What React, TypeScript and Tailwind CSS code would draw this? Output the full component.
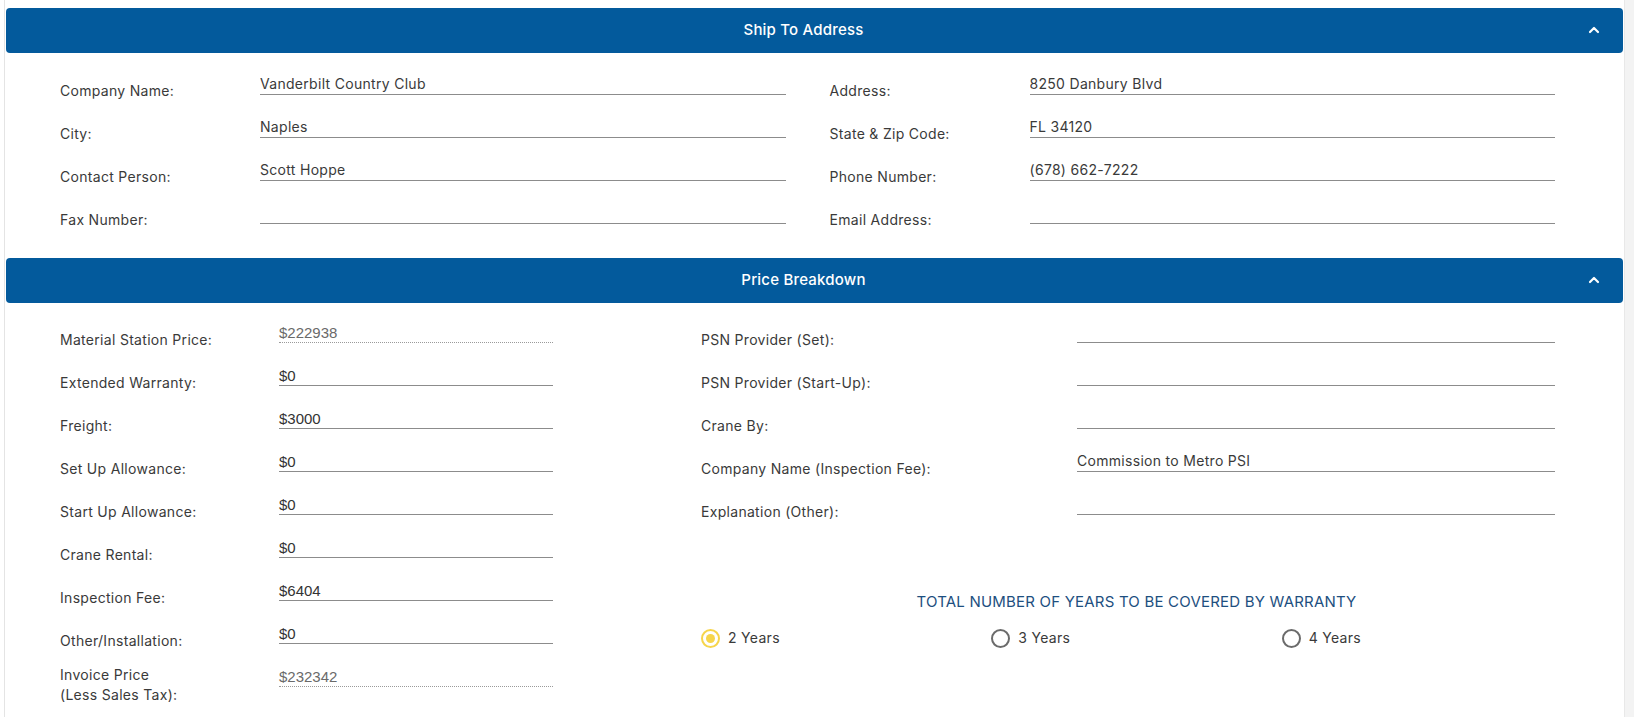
import React from "react";

const shipLeft = [
  { label: "Company Name:", value: "Vanderbilt Country Club" },
  { label: "City:", value: "Naples" },
  { label: "Contact Person:", value: "Scott Hoppe" },
  { label: "Fax Number:", value: "" },
];

const shipRight = [
  { label: "Address:", value: "8250 Danbury Blvd" },
  { label: "State & Zip Code:", value: "FL 34120" },
  { label: "Phone Number:", value: "(678) 662-7222" },
  { label: "Email Address:", value: "" },
];

const prices = [
  { label: "Material Station Price:", value: "$222938", readOnly: true },
  { label: "Extended Warranty:", value: "$0" },
  { label: "Freight:", value: "$3000" },
  { label: "Set Up Allowance:", value: "$0" },
  { label: "Start Up Allowance:", value: "$0" },
  { label: "Crane Rental:", value: "$0" },
  { label: "Inspection Fee:", value: "$6404" },
  { label: "Other/Installation:", value: "$0" },
];

const providers = [
  { label: "PSN Provider (Set):", value: "" },
  { label: "PSN Provider (Start-Up):", value: "" },
  { label: "Crane By:", value: "" },
  { label: "Company Name (Inspection Fee):", value: "Commission to Metro PSI" },
  { label: "Explanation (Other):", value: "" },
];

const SectionHeader = ({ title }: { title: string }) => (
  <div className="mx-[1px] flex h-[45px] items-center rounded-[4px] bg-[#035a9c] pl-[13px] pr-[23px] text-white">
    <div className="flex-1 text-center text-[15px] font-medium tracking-[0.2px]">{title}</div>
    <svg width="12" height="8" viewBox="0 0 12 8" className="mb-[2px]">
      <polyline points="2,6 6,2 10,6" fill="none" stroke="white" strokeWidth="2.2" strokeLinecap="round" strokeLinejoin="round" />
    </svg>
  </div>
);

const ShipRow = ({ label, value }: { label: string; value: string }) => (
  <div className="grid h-[43px] grid-cols-[200px_1fr] items-start">
    <div className="mt-[28px] leading-[20px] text-[14px] tracking-[0.3px] text-[#3a3a3a]">{label}</div>
    <div className="mt-[20px] h-[22px] truncate border-b border-[#8c8c8c] pt-[1px] leading-[20px] text-[14px] tracking-[0.3px] text-[#3a3a3a]">
      {value}
    </div>
  </div>
);

const Radio = ({ label, checked }: { label: string; checked?: boolean }) => (
  <div className="flex items-center gap-[8px]">
    {checked ? (
      <span className="flex h-[19px] w-[19px] items-center justify-center rounded-full border-2 border-[#f6d54b] bg-white">
        <span className="h-[9px] w-[9px] rounded-full bg-[#f6d54b]" />
      </span>
    ) : (
      <span className="h-[19px] w-[19px] rounded-full border-2 border-[#6b6b6b] bg-white" />
    )}
    <span className="leading-[20px] text-[14px] tracking-[0.3px] text-[#3a3a3a]">{label}</span>
  </div>
);

export default function App() {
  return (
    <div className="flex h-[717px] w-full overflow-hidden bg-white" style={{ fontFamily: "Inter, 'Noto Sans', sans-serif" }}>
      <div className="ml-[4px] flex-1 border-l border-[#e4e4e4] pt-[8px]">
        <SectionHeader title="Ship To Address" />
        <div className="grid grid-cols-2 gap-x-[44px] pl-[55px] pr-[69px] pb-[33px]">
          <div className="flex flex-col">
            {shipLeft.map((r) => (
              <ShipRow key={r.label} {...r} />
            ))}
          </div>
          <div className="flex flex-col">
            {shipRight.map((r) => (
              <ShipRow key={r.label} {...r} />
            ))}
          </div>
        </div>

        <SectionHeader title="Price Breakdown" />
        <div className="flex pl-[55px]">
          <div className="flex w-[641px] flex-col">
            {prices.map((r) => (
              <div key={r.label} className="flex h-[43px] items-start">
                <div className="mt-[27px] w-[219px] leading-[20px] text-[14px] tracking-[0.3px] text-[#3a3a3a]">{r.label}</div>
                <div
                  className={`mt-[18px] h-[22px] w-[274px] border-b pt-[2px] leading-[20px] text-[15px] ${
                    r.readOnly ? "border-dotted border-[#9a9a9a] text-[#6a6a6a]" : "border-[#8c8c8c] text-[#333]"
                  }`}
                  style={{ fontFamily: "'Liberation Sans', Arial, sans-serif" }}
                >
                  {r.value}
                </div>
              </div>
            ))}
            <div className="flex h-[43px] items-start">
              <div className="mt-[18px] w-[219px] leading-[20px] text-[14px] tracking-[0.3px] text-[#3a3a3a]">
                Invoice Price
                <br />
                (Less Sales Tax):
              </div>
              <div
                className="mt-[18px] h-[22px] w-[274px] border-b border-dotted border-[#9a9a9a] pt-[2px] leading-[20px] text-[15px] text-[#6a6a6a]"
                style={{ fontFamily: "'Liberation Sans', Arial, sans-serif" }}
              >
                $232342
              </div>
            </div>
          </div>

          <div className="flex w-[871px] flex-col">
            {providers.map((r) => (
              <div key={r.label} className="flex h-[43px] items-start">
                <div className="mt-[27px] w-[376px] leading-[20px] text-[14px] tracking-[0.3px] text-[#3a3a3a]">{r.label}</div>
                <div className="mr-[17px] mt-[18px] h-[22px] flex-1 border-b border-[#8c8c8c] pt-[1px] leading-[20px] text-[14px] tracking-[0.3px] text-[#3a3a3a]">
                  {r.value}
                </div>
              </div>
            ))}
            <div className="mt-[74px] text-center leading-[20px] text-[15px] tracking-[0.2px] text-[#1d4f80]">
              TOTAL NUMBER OF YEARS TO BE COVERED BY WARRANTY
            </div>
            <div className="mt-[16px] grid grid-cols-3">
              <Radio label="2 Years" checked />
              <Radio label="3 Years" />
              <Radio label="4 Years" />
            </div>
          </div>
        </div>
      </div>
      <div className="w-[10px] border-l border-[#e8e8e8] bg-[#f3f3f3]" />
    </div>
  );
}
